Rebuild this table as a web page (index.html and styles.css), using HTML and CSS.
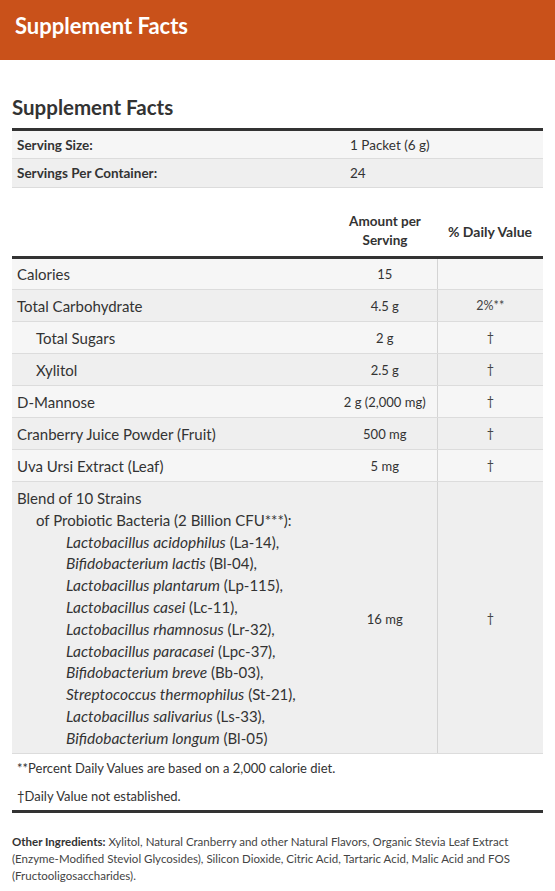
FILE: index.html
```html
<!DOCTYPE html>
<html lang="en">
<head>
<meta charset="utf-8">
<title>Supplement Facts</title>
<link rel="stylesheet" href="styles.css">
</head>
<body>
<header class="topbar"><h1 class="topbar-title">Supplement Facts</h1></header>
<main class="content">
  <h2 class="facts-title">Supplement Facts</h2>
  <table class="serving">
    <tr class="row-a"><th>Serving Size:</th><td>1 Packet (6 g)</td></tr>
    <tr class="row-b"><th>Servings Per Container:</th><td>24</td></tr>
  </table>
  <table class="facts">
    <colgroup><col class="c-name"><col class="c-amt"><col class="c-dv"></colgroup>
    <thead>
      <tr><th></th><th class="amt">Amount per Serving</th><th class="dv">% Daily Value</th></tr>
    </thead>
    <tbody>
      <tr class="row-a"><td>Calories</td><td class="amt">15</td><td class="dv"></td></tr>
      <tr class="row-b"><td>Total Carbohydrate</td><td class="amt">4.5 g</td><td class="dv">2%**</td></tr>
      <tr class="row-a"><td class="ind1">Total Sugars</td><td class="amt">2 g</td><td class="dv">†</td></tr>
      <tr class="row-b"><td class="ind1">Xylitol</td><td class="amt">2.5 g</td><td class="dv">†</td></tr>
      <tr class="row-a"><td>D-Mannose</td><td class="amt">2 g (2,000 mg)</td><td class="dv">†</td></tr>
      <tr class="row-b"><td>Cranberry Juice Powder (Fruit)</td><td class="amt">500 mg</td><td class="dv">†</td></tr>
      <tr class="row-a"><td>Uva Ursi Extract (Leaf)</td><td class="amt">5 mg</td><td class="dv">†</td></tr>
      <tr class="row-b blend">
        <td>
          <div class="bl">Blend of 10 Strains</div>
          <div class="bl ind1">of Probiotic Bacteria (2 Billion CFU***):</div>
          <div class="bl ind2"><i>Lactobacillus acidophilus</i> (La-14),</div>
          <div class="bl ind2"><i>Bifidobacterium lactis</i> (Bl-04),</div>
          <div class="bl ind2"><i>Lactobacillus plantarum</i> (Lp-115),</div>
          <div class="bl ind2"><i>Lactobacillus casei</i> (Lc-11),</div>
          <div class="bl ind2"><i>Lactobacillus rhamnosus</i> (Lr-32),</div>
          <div class="bl ind2"><i>Lactobacillus paracasei</i> (Lpc-37),</div>
          <div class="bl ind2"><i>Bifidobacterium breve</i> (Bb-03),</div>
          <div class="bl ind2"><i>Streptococcus thermophilus</i> (St-21),</div>
          <div class="bl ind2"><i>Lactobacillus salivarius</i> (Ls-33),</div>
          <div class="bl ind2"><i>Bifidobacterium longum</i> (Bl-05)</div>
        </td>
        <td class="amt">16 mg</td>
        <td class="dv">†</td>
      </tr>
    </tbody>
  </table>
  <div class="notes">
    <p class="note">**Percent Daily Values are based on a 2,000 calorie diet.</p>
    <p class="note">†Daily Value not established.</p>
  </div>
  <p class="other"><span class="other-label">Other Ingredients:</span> Xylitol, Natural Cranberry and other Natural Flavors, Organic Stevia Leaf Extract (Enzyme-Modified Steviol Glycosides), Silicon Dioxide, Citric Acid, Tartaric Acid, Malic Acid and FOS (Fructooligosaccharides).</p>
</main>
</body>
</html>
```

FILE: styles.css
```css
* { box-sizing: border-box; }
html, body { margin: 0; padding: 0; background: #fff; }
body { font-family: Lato, "Open Sans", sans-serif; color: #333; }

.topbar {
  background: #c9511a;
  height: 60px;
  display: flex;
  align-items: center;
  padding: 0 15px 9px;
}
.topbar-title {
  margin: 0;
  color: #fff;
  font-size: 22px;
  font-weight: 700;
}

.content { padding: 0 12px; }

.facts-title {
  margin: 35px 0 9px;
  font-size: 20.5px;
  line-height: 24px;
  font-weight: 700;
  color: #333;
}

table { width: 100%; border-collapse: collapse; table-layout: fixed; }

.serving { border-top: 3px solid #333; }
.serving th, .serving td {
  height: 29px;
  padding: 0 5px;
  font-size: 13.5px;
  text-align: left;
  border-bottom: 1px solid #dcdcdc;
  vertical-align: middle;
}
.serving th { font-weight: 700; width: 333px; }
.serving td { font-weight: 400; }

.row-a { background: #f6f6f6; }
.row-b { background: #efefef; }

.c-name { width: 321px; }
.c-amt { width: 104px; }
.c-dv { width: 106px; }

.facts thead th {
  padding: 24px 4px 6px;
  font-size: 13.5px;
  line-height: 19px;
  font-weight: 700;
  text-align: center;
  border-bottom: 3px solid #333;
  vertical-align: middle;
}
.facts thead th.dv { font-size: 14px; }
.facts tbody td {
  height: 32px;
  padding: 0 5px;
  font-size: 15px;
  border-bottom: 1px solid #dcdcdc;
  vertical-align: middle;
}
.facts td.amt { text-align: center; font-size: 13px; }
.facts td.dv {
  text-align: center;
  font-size: 12.5px;
  border-left: 1px solid #d4d4d4;
  color: #444;
}
.ind1 { padding-left: 24px !important; }
.bl.ind1 { padding-left: 19px !important; }
.bl.ind2 { padding-left: 49px; }
.facts tbody .blend td { padding-top: 6px; padding-bottom: 3px; }
.bl { line-height: 21.8px; font-size: 15px; white-space: nowrap; }
.bl i { font-size: 15.5px; }

.notes { border-bottom: 3px solid #333; }
.note {
  margin: 0;
  height: 28px;
  display: flex;
  align-items: center;
  padding: 0 5px;
  font-size: 13px;
}

.other {
  margin: 20px 0 0;
  font-size: 11.5px;
  line-height: 17px;
  color: #444;
}
.other-label { color: #333; font-weight: 700; }
```
